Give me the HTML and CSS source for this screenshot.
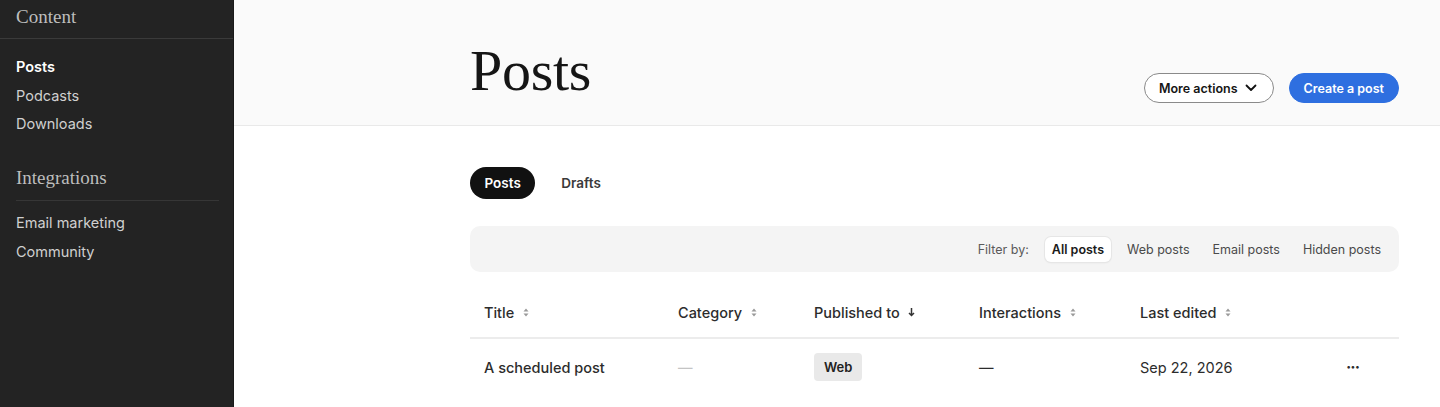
FILE: index.html
```html
<!DOCTYPE html>
<html lang="en">
<head>
<meta charset="utf-8">
<title>Posts</title>
<link rel="stylesheet" href="styles.css">
</head>
<body>
<div class="app">
  <aside class="sidebar">
    <div class="side-section">
      <div class="side-heading first">Content</div>
      <nav class="side-nav">
        <a class="side-link active">Posts</a>
        <a class="side-link">Podcasts</a>
        <a class="side-link">Downloads</a>
      </nav>
    </div>
    <div class="side-section">
      <div class="side-heading inset">Integrations</div>
      <nav class="side-nav">
        <a class="side-link">Email marketing</a>
        <a class="side-link">Community</a>
      </nav>
    </div>
  </aside>
  <main class="main">
    <header class="page-header">
      <div class="container header-inner">
        <h1 class="page-title">Posts</h1>
        <div class="header-actions">
          <button class="btn btn-outline">More actions
            <svg class="chev" width="12" height="8" viewBox="0 0 12 8"><path d="M1.5 1.5 L6 6 L10.5 1.5" fill="none" stroke="#111" stroke-width="1.8" stroke-linecap="round" stroke-linejoin="round"/></svg>
          </button>
          <button class="btn btn-primary">Create a post</button>
        </div>
      </div>
    </header>
    <section class="container body">
      <div class="tabs">
        <span class="tab active">Posts</span>
        <span class="tab">Drafts</span>
      </div>
      <div class="filter-bar">
        <span class="filter-label">Filter by:</span>
        <span class="filter-item selected">All posts</span>
        <span class="filter-item">Web posts</span>
        <span class="filter-item">Email posts</span>
        <span class="filter-item">Hidden posts</span>
      </div>
      <div class="table">
        <div class="row head">
          <div class="cell">Title <svg class="sort" width="6" height="9" viewBox="0 0 6 9"><path d="M3 0.5 L5.5 3.5 H0.5 Z M3 8.5 L5.5 5.5 H0.5 Z" fill="#9a9a9a"/></svg></div>
          <div class="cell">Category <svg class="sort" width="6" height="9" viewBox="0 0 6 9"><path d="M3 0.5 L5.5 3.5 H0.5 Z M3 8.5 L5.5 5.5 H0.5 Z" fill="#9a9a9a"/></svg></div>
          <div class="cell">Published to <svg class="sort down" width="7" height="10" viewBox="0 0 7 10"><path d="M3.5 1 V8.5 M1 6 L3.5 8.5 L6 6" fill="none" stroke="#333" stroke-width="1.5"/></svg></div>
          <div class="cell">Interactions <svg class="sort" width="6" height="9" viewBox="0 0 6 9"><path d="M3 0.5 L5.5 3.5 H0.5 Z M3 8.5 L5.5 5.5 H0.5 Z" fill="#9a9a9a"/></svg></div>
          <div class="cell">Last edited <svg class="sort" width="6" height="9" viewBox="0 0 6 9"><path d="M3 0.5 L5.5 3.5 H0.5 Z M3 8.5 L5.5 5.5 H0.5 Z" fill="#9a9a9a"/></svg></div>
          <div class="cell"></div>
        </div>
        <div class="row">
          <div class="cell title-cell">A scheduled post</div>
          <div class="cell muted">—</div>
          <div class="cell"><span class="badge">Web</span></div>
          <div class="cell">—</div>
          <div class="cell">Sep 22, 2026</div>
          <div class="cell dots">···</div>
        </div>
      </div>
    </section>
  </main>
</div>
</body>
</html>
```
FILE: styles.css
```css
* { box-sizing: border-box; }
html, body { margin: 0; padding: 0; }
body {
  font-family: Inter, "Noto Sans", "Liberation Sans", sans-serif;
  color: #222;
  background: #fff;
  height: 407px;
  overflow: hidden;
}
.app {
  display: flex;
  min-height: 407px;
}
.sidebar {
  width: 234px;
  flex: none;
  background: #232323;
  color: #d2d2d2;
  border-right: 1px solid #1a1a1a;
}
.side-heading {
  font-family: "Liberation Serif", "DejaVu Serif", serif;
  font-size: 19px;
  color: #bdbdbd;
  line-height: 24px;
}
.side-heading.first {
  padding: 5px 16px 9px;
  border-bottom: 1px solid #3a3a3a;
}
.side-heading.inset {
  margin: 0 14px 0 16px;
  padding: 4px 0 10px;
  border-bottom: 1px solid #363636;
}
.side-nav {
  display: flex;
  flex-direction: column;
  padding: 14px 16px 0;
}
.side-section + .side-section { margin-top: 23px; }
.side-section + .side-section .side-nav { padding-top: 7px; }
.side-link {
  font-size: 14.5px;
  line-height: 28.5px;
  color: #d0d0d0;
}
.side-section + .side-section .side-link { line-height: 29px; }
.side-link.active {
  color: #fff;
  font-weight: 600;
}
.main {
  flex: 1;
  min-width: 0;
}
.container {
  padding-left: 236px;
  padding-right: 41px;
}
.page-header {
  background: #fafafa;
  border-bottom: 1px solid #e9e9e9;
  height: 126px;
}
.header-inner {
  display: flex;
  justify-content: space-between;
  align-items: flex-start;
  padding-top: 42px;
}
.page-title {
  margin: 0;
  font-family: "Liberation Serif", "DejaVu Serif", serif;
  font-weight: 400;
  font-size: 58px;
  line-height: 58px;
  color: #151515;
  letter-spacing: -0.3px;
}
.header-actions {
  display: flex;
  gap: 15px;
  margin-top: 31px;
}
.btn {
  height: 30px;
  border-radius: 15px;
  font-family: Inter, "Liberation Sans", sans-serif;
  font-size: 12.5px;
  font-weight: 600;
  display: inline-flex;
  align-items: center;
  padding: 0 14px;
  cursor: pointer;
}
.btn-outline {
  background: #fff;
  border: 1px solid #8a8a8a;
  color: #151515;
  padding-left: 14px;
  padding-right: 16px;
}
.chev { margin-left: 7px; }
.btn-primary {
  background: #2e6fe0;
  border: 1px solid #2e6fe0;
  color: #fff;
}
.body { padding-top: 41px; }
.tabs {
  display: flex;
  align-items: center;
  gap: 12px;
}
.tab {
  height: 32px;
  line-height: 32px;
  padding: 0 14px;
  border-radius: 16px;
  font-size: 13.5px;
  font-weight: 600;
  color: #3a3a3a;
}
.tab.active {
  background: #111;
  color: #fff;
  padding: 0 14.5px;
}
.filter-bar {
  margin-top: 27px;
  height: 46px;
  background: #f4f4f4;
  border-radius: 10px;
  display: flex;
  justify-content: flex-end;
  align-items: center;
  gap: 9px;
  padding-right: 11px;
  font-size: 12.5px;
}
.filter-label {
  color: #5a5a5a;
  margin-right: 7px;
}
.filter-item {
  padding: 0 7px;
  height: 25px;
  line-height: 25px;
  color: #4a4a4a;
  border-radius: 6px;
}
.filter-item.selected {
  background: #fff;
  color: #1a1a1a;
  font-weight: 600;
  box-shadow: 0 0 0 1px #e6e6e6, 0 1px 2px rgba(0,0,0,0.08);
}
.table { margin-top: 15px; }
.row {
  display: grid;
  grid-template-columns: 194px 136px 165px 161px 1fr 67px;
  align-items: center;
}
.row.head {
  height: 52px;
  border-bottom: 2px solid #ececec;
  font-size: 14.5px;
  font-weight: 500;
  color: #2c2c2c;
}
.row:not(.head) {
  height: 56px;
  font-size: 14.5px;
  color: #2c2c2c;
}
.cell {
  padding-left: 14px;
  display: flex;
  align-items: center;
}
.sort { margin-left: 9px; }
.sort.down { margin-left: 8px; }
.title-cell { font-weight: 500; }
.muted { color: #c4c4c4; }
.badge {
  background: #e9e9e9;
  border-radius: 4px;
  height: 28px;
  line-height: 28px;
  padding: 0 10px;
  font-size: 13px;
  font-weight: 600;
  color: #222;
}
.dots {
  font-weight: 700;
  font-size: 16px;
  letter-spacing: -1px;
}
```
